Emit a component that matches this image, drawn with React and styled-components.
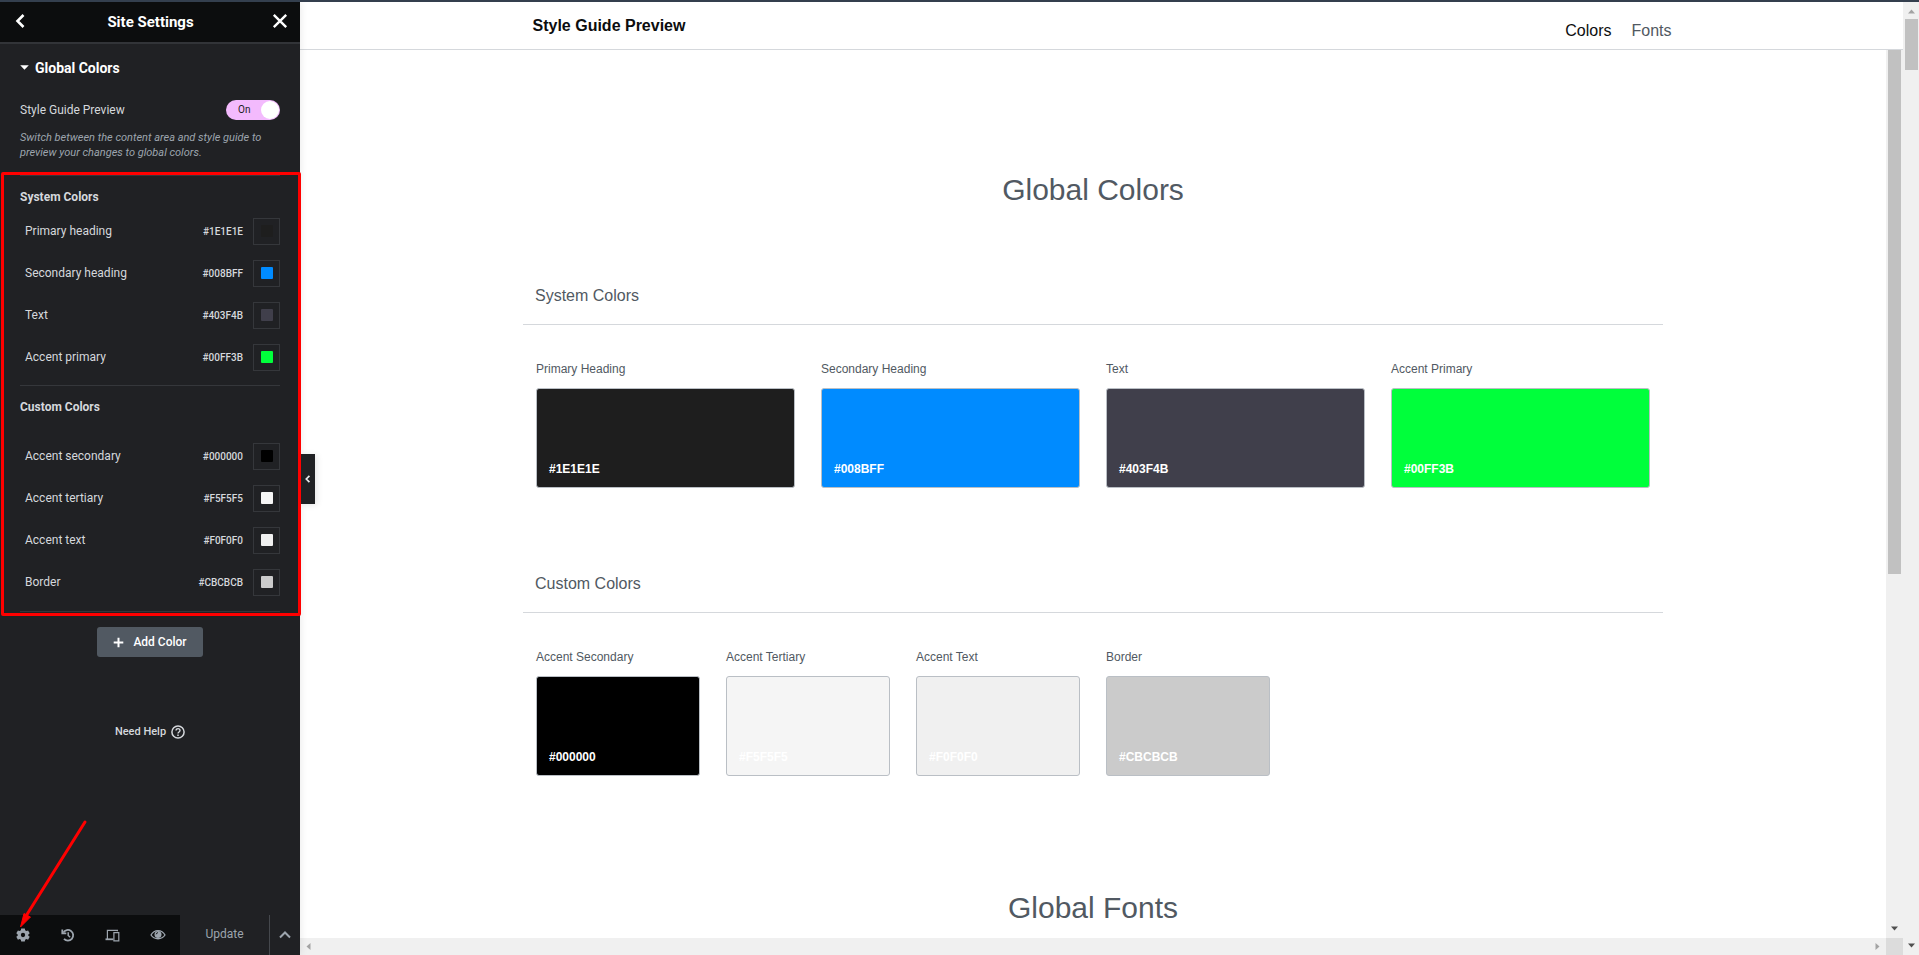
import React, { useState } from "react";
import styled, { createGlobalStyle } from "styled-components";

const GlobalStyle = createGlobalStyle`
  *, *::before, *::after { box-sizing: border-box; }
  body {
    margin: 0;
    background: #fff;
    font-family: "Liberation Sans", Arial, sans-serif;
  }
  h1, h2, h3, p, ul { margin: 0; padding: 0; font-weight: 400; }
  ul { list-style: none; }
  button { font: inherit; border: 0; padding: 0; margin: 0; background: none; color: inherit; cursor: pointer; }
  a { color: inherit; text-decoration: none; }
  svg { display: block; }
`;

const Window = styled.div`
  position: relative;
  display: flex;
  height: 100vh;
  border-top: 2px solid #343f4e;
  overflow: hidden;
`;

/* ---------- settings panel ---------- */

const Panel = styled.aside`
  position: relative;
  z-index: 1;
  display: flex;
  flex-direction: column;
  flex: 0 0 300px;
  background: #202124;
  color: #d5d8dc;
  font-family: Roboto, sans-serif;
  font-size: 12px;
  box-shadow: 0 0 8px rgba(0, 0, 0, 0.1);
`;

const PanelHeader = styled.header`
  display: flex;
  align-items: center;
  justify-content: space-between;
  height: 42px;
  flex: none;
  padding: 0 12px 2px 15px;
  background: #0c0d0e;
  border-bottom: 2px solid #323438;
  color: #fff;
`;

const PanelTitle = styled.h1`
  padding-top: 2px;
  font-size: 15px;
  line-height: 20px;
  font-weight: 700;
`;

const HeaderButton = styled.button`
  display: grid;
  place-items: center;
`;

const PanelBody = styled.div`
  flex: 1;
  min-height: 0;
  padding: 0 20px;
`;

const SectionToggle = styled.button`
  display: flex;
  align-items: center;
  gap: 6px;
  height: 48px;
  padding-bottom: 1px;
  color: #fff;
  font-size: 14px;
  font-weight: 700;
`;

const SwitchRow = styled.label`
  display: flex;
  align-items: center;
  justify-content: space-between;
  height: 36px;
  line-height: 20px;
  cursor: pointer;
`;

const SwitchInput = styled.input`
  position: absolute;
  opacity: 0;
`;

const SwitchTrack = styled.span`
  display: flex;
  align-items: center;
  justify-content: space-between;
  flex-direction: ${(p) => (p.$on ? "row" : "row-reverse")};
  width: 54px;
  height: 20px;
  padding: 0 1px 0 12px;
  border-radius: 10px;
  background: ${(p) => (p.$on ? "#f3bafd" : "#515962")};
  color: #202124;
  font-size: 10px;

  &::after {
    content: "";
    width: 18px;
    height: 18px;
    border-radius: 50%;
    background: #fff;
  }
`;

const Hint = styled.p`
  margin-top: 2px;
  padding-bottom: 15px;
  color: #9da5ae;
  font-size: 11px;
  font-style: italic;
  line-height: 15px;
`;

const ColorGroup = styled.section`
  border-top: 1px solid #35373b;
`;

const GroupTitle = styled.h2`
  padding: 14px 0 ${(p) => (p.$spaced ? 28 : 13)}px;
  font-size: 12px;
  line-height: 15px;
  font-weight: 700;
`;

const ColorList = styled.ul`
  display: grid;
  gap: 15px;
  padding-bottom: 14px;
`;

const ColorRow = styled.li`
  display: flex;
  align-items: center;
  gap: 10px;
  height: 27px;
  padding-left: 5px;
`;

const ColorName = styled.span`
  flex: 1;
  line-height: 15px;
`;

const ColorCode = styled.span`
  font-size: 10px;
  font-weight: 500;
  line-height: 15px;
`;

const Picker = styled.button`
  display: grid;
  width: 27px;
  height: 27px;
  padding: 6px 6px 7px 7px;
  border: 1px solid #35373b;

  &::before {
    content: "";
    border-radius: 1px;
    background: ${(p) => p.$color};
  }
`;

const AddArea = styled.div`
  display: flex;
  flex-direction: column;
  align-items: center;
  gap: 67px;
  margin-top: 1px;
  padding-top: 15px;
  border-top: 1px solid #35373b;
`;

const AddButton = styled.button`
  display: flex;
  align-items: center;
  justify-content: center;
  gap: 9px;
  width: 106px;
  height: 30px;
  border-radius: 3px;
  background: #515962;
  color: #fff;
  font-size: 12px;
  font-weight: 500;
`;

const HelpLink = styled.a`
  display: flex;
  align-items: center;
  gap: 5px;
  font-size: 11px;
  font-weight: 500;
  line-height: 16px;
`;

const PanelFooter = styled.footer`
  display: flex;
  height: 40px;
  flex: none;
  color: #9da5ae;
`;

const Tools = styled.nav`
  display: flex;
  flex: 0 0 180px;
  background: #0c0d0e;
`;

const Tool = styled.button`
  display: grid;
  place-items: center;
  flex: 1;
`;

const UpdateButton = styled.button`
  flex: 1;
  padding-bottom: 2px;
  border-right: 1px solid #45484d;
  font-size: 12px;
`;

const UpdateMenu = styled.button`
  display: grid;
  place-items: center;
  width: 30px;
`;

const CollapseHandle = styled.button`
  position: absolute;
  top: calc(50% - 25px);
  left: 100%;
  display: grid;
  place-items: center;
  width: 15px;
  height: 50px;
  background: #202124;
  color: #e6e8ea;
  box-shadow: 2px 1px 6px rgba(0, 0, 0, 0.1);
`;

/* ---------- preview ---------- */

const Preview = styled.main`
  display: flex;
  flex-direction: column;
  flex: 1;
  min-width: 0;
`;

const PreviewHeader = styled.header`
  flex: none;
  height: 48px;
  border-bottom: 1px solid #d5d8dc;
`;

const HeaderInner = styled.div`
  display: flex;
  justify-content: space-between;
  width: 100%;
  max-width: 1140px;
  margin: 0 auto;
  padding: 10px 0 0 1px;
`;

const PreviewTitle = styled.h2`
  font-size: 16px;
  font-weight: 700;
  line-height: 28px;
  color: #0c0d0e;
`;

const Links = styled.nav`
  display: flex;
  gap: 20px;
  padding-top: 5px;
  font-size: 16px;
  line-height: 28px;
`;

const TabLink = styled.a`
  color: ${(p) => (p.$active ? "#0c0d0e" : "#515962")};
`;

const PreviewBody = styled.div`
  display: flex;
  flex: 1;
  min-height: 0;
`;

const Canvas = styled.div`
  flex: 1;
  min-width: 0;
  overflow: hidden;
  color: #515962;
`;

const Guide = styled.div`
  width: 100%;
  max-width: 1140px;
  margin: 0 auto;
  padding-top: 120px;
`;

const GuideTitle = styled.h2`
  font-size: 30px;
  line-height: 40px;
  text-align: center;
`;

const SwatchSection = styled.section`
  padding-top: ${(p) => (p.$first ? 76 : 86)}px;
`;

const SwatchTitle = styled.h3`
  padding: 0 12px 18px;
  border-bottom: 1px solid #d5d8dc;
  font-size: 16px;
  line-height: 20px;
`;

const SwatchGrid = styled.div`
  display: grid;
  grid-template-columns: repeat(${(p) => p.$columns}, 1fr);
  padding-top: 36px;
`;

const Swatch = styled.figure`
  margin: 0;
  padding: 0 13px;
`;

const SwatchName = styled.figcaption`
  padding-bottom: 11px;
  font-size: 12px;
  line-height: 16px;
`;

const SwatchCard = styled.div`
  display: flex;
  align-items: flex-end;
  height: 100px;
  padding: 10px 12px;
  border: 1px solid #babfc5;
  border-radius: 3px;
  background: ${(p) => p.$color};
  color: #fff;
  font-size: 12px;
  font-weight: 700;
  line-height: 16px;
`;

const NextTitle = styled(GuideTitle)`
  padding-top: 112px;
`;

/* ---------- scroll tracks ---------- */

const Track = styled.div`
  display: flex;
  flex-direction: column;
  justify-content: space-between;
  align-items: center;
  flex: 0 0 ${(p) => p.$size || 17}px;
  padding: ${(p) => p.$pad};
  background: #f0f0f0;
`;

const Thumb = styled.div`
  width: 13px;
  height: ${(p) => p.$height};
  margin-bottom: auto;
  background: #c1c1c1;
`;

const OuterThumb = styled(Thumb)`
  margin-top: 5px;
`;

const BottomBar = styled.div`
  display: flex;
  flex: 0 0 17px;
`;

const BottomTrack = styled.div`
  display: flex;
  flex: 1;
  align-items: center;
  justify-content: space-between;
  padding: 0 6px;
  background: #f0f0f0;
`;

const Corner = styled.div`
  width: 17px;
  background: #dcdcdc;
`;

/* ---------- annotation ---------- */

const Highlight = styled.div`
  position: absolute;
  z-index: 2;
  top: 170px;
  left: 1px;
  width: 300px;
  height: 444px;
  border: 3px solid #f00;
  border-radius: 2px;
  pointer-events: none;
`;

const Pointer = styled.svg`
  position: absolute;
  z-index: 2;
  left: 16px;
  bottom: 24px;
  pointer-events: none;
`;

/* ---------- icons ---------- */

const Chevron = ({ size, d, width = 2 }) => (
  <svg width={size} height={size} viewBox="0 0 14 14" fill="none" stroke="currentColor" strokeWidth={width}>
    <path d={d} />
  </svg>
);

const CloseIcon = () => (
  <svg width="16" height="16" viewBox="0 0 16 16" fill="none" stroke="currentColor" strokeWidth="2.4">
    <path d="M1.8 1.8 14.2 14.2M14.2 1.8 1.8 14.2" />
  </svg>
);

const CaretIcon = () => (
  <svg width="9" height="5" viewBox="0 0 9 5" fill="currentColor">
    <path d="M0.2 0.3h8.600L4.5 4.700z" />
  </svg>
);

const PlusIcon = () => (
  <svg width="11" height="11" viewBox="0 0 11 11" fill="none" stroke="currentColor" strokeWidth="2">
    <path d="M5.5 .7v9.600M.7 5.5h9.600" />
  </svg>
);

const HelpIcon = () => (
  <svg width="14" height="14" viewBox="0 0 14 14" fill="none" stroke="currentColor" strokeWidth="1.5">
    <circle cx="7" cy="7" r="6.1" />
    <path d="M5 5.6c0-2.7 4-2.5 4-.1 0 1.5-2 1.5-2 3" strokeWidth="1.4" />
    <path d="M7 9.4v1.5" />
  </svg>
);

const GearIcon = () => (
  <svg width="14" height="14" viewBox="0 0 24 24" fill="currentColor">
    <path
      fillRule="evenodd"
      d="M8.900 0.800h6.200l.6 3.200 2 1.200 3-1.100 2.800 5-2.400 2v2l2.400 2-2.800 5-3-1.100-2 1.200-.6 3H8.900l-.6-3-2-1.200-3 1.100-2.800-5 2.400-2v-2l-2.400-2 2.800-5 3 1.100 2-1.200zM12 8.300a3.700 3.700 0 1 0 0 7.400 3.700 3.700 0 0 0 0-7.400z"
    />
  </svg>
);

const HistoryIcon = () => (
  <svg width="14" height="14" viewBox="0 0 14 14" fill="none" stroke="currentColor" strokeWidth="1.8">
    <path d="M2.300 4.600A5.300 5.300 0 1 1 3 10.900" />
    <path d="M1.300 1.400v4h4" />
    <path d="M7.200 4.200v3.300l2 1.700" strokeWidth="1.500" />
  </svg>
);

const DevicesIcon = () => (
  <svg width="15" height="13" viewBox="0 0 15 13" fill="none" stroke="currentColor" strokeWidth="1.200">
    <path d="M12.400 2.200V1.400H2.400V10" />
    <path d="M8.900 3.700h4.900v8.200H8.900z" />
    <path d="M.5 10.300h7.700" strokeWidth="1.800" />
  </svg>
);

const EyeIcon = () => (
  <svg width="16" height="12" viewBox="0 0 16 12">
    <path
      d="M1 6C4.200.2 11.800.2 15 6 11.800 11 4.200 11 1 6z"
      fill="none"
      stroke="currentColor"
      strokeWidth="1.300"
    />
    <circle cx="8" cy="5.500" r="3.500" fill="currentColor" />
    <path d="M6.200 5.300A2 2 0 0 1 8 3.600" fill="none" stroke="#0c0d0e" strokeWidth=".9" />
  </svg>
);

const arrows = {
  up: { w: 7, h: 5, d: "M0 4.500h7L3.500.5z" },
  down: { w: 7, h: 5, d: "M0 .5h7L3.500 4.500z" },
  left: { w: 5, h: 7, d: "M4.500 0v7L.5 3.500z" },
  right: { w: 5, h: 7, d: "M.5 0v7l4-3.500z" },
};

const ScrollArrow = ({ dir, color = "#a3a3a3" }) => {
  const { w, h, d } = arrows[dir];
  return (
    <svg width={w} height={h} fill={color} aria-hidden="true">
      <path d={d} />
    </svg>
  );
};

/* ---------- data ---------- */

const systemColors = [
  { name: "Primary heading", title: "Primary Heading", code: "#1E1E1E" },
  { name: "Secondary heading", title: "Secondary Heading", code: "#008BFF" },
  { name: "Text", title: "Text", code: "#403F4B" },
  { name: "Accent primary", title: "Accent Primary", code: "#00FF3B" },
];

const customColors = [
  { name: "Accent secondary", title: "Accent Secondary", code: "#000000" },
  { name: "Accent tertiary", title: "Accent Tertiary", code: "#F5F5F5" },
  { name: "Accent text", title: "Accent Text", code: "#F0F0F0" },
  { name: "Border", title: "Border", code: "#CBCBCB" },
];

const PanelColors = ({ title, colors, spaced }) => (
  <ColorGroup>
    <GroupTitle $spaced={spaced}>{title}</GroupTitle>
    <ColorList>
      {colors.map((c) => (
        <ColorRow key={c.code}>
          <ColorName>{c.name}</ColorName>
          <ColorCode>{c.code}</ColorCode>
          <Picker type="button" $color={c.code} aria-label={`Pick ${c.name}`} />
        </ColorRow>
      ))}
    </ColorList>
  </ColorGroup>
);

const GuideColors = ({ title, colors, columns, first }) => (
  <SwatchSection $first={first}>
    <SwatchTitle>{title}</SwatchTitle>
    <SwatchGrid $columns={columns}>
      {colors.map((c) => (
        <Swatch key={c.code}>
          <SwatchName>{c.title}</SwatchName>
          <SwatchCard $color={c.code}>{c.code}</SwatchCard>
        </Swatch>
      ))}
    </SwatchGrid>
  </SwatchSection>
);

export default function App() {
  const [preview, setPreview] = useState(true);

  return (
    <>
      <GlobalStyle />
      <Window>
        <Panel>
          <PanelHeader>
            <HeaderButton type="button" aria-label="Back">
              <Chevron size={14} width={2.6} d="M8.500 1 2.500 7l6 6" />
            </HeaderButton>
            <PanelTitle>Site Settings</PanelTitle>
            <HeaderButton type="button" aria-label="Close">
              <CloseIcon />
            </HeaderButton>
          </PanelHeader>

          <PanelBody>
            <SectionToggle type="button" aria-expanded="true">
              <CaretIcon />
              Global Colors
            </SectionToggle>
            <SwitchRow>
              Style Guide Preview
              <SwitchInput type="checkbox" checked={preview} onChange={(e) => setPreview(e.target.checked)} />
              <SwitchTrack $on={preview}>{preview ? "On" : "Off"}</SwitchTrack>
            </SwitchRow>
            <Hint>Switch between the content area and style guide to preview your changes to global colors.</Hint>

            <PanelColors title="System Colors" colors={systemColors} />
            <PanelColors title="Custom Colors" colors={customColors} spaced />

            <AddArea>
              <AddButton type="button">
                <PlusIcon />
                Add Color
              </AddButton>
              <HelpLink href="#help">
                Need Help
                <HelpIcon />
              </HelpLink>
            </AddArea>
          </PanelBody>

          <PanelFooter>
            <Tools>
              <Tool type="button" aria-label="Settings"><GearIcon /></Tool>
              <Tool type="button" aria-label="History"><HistoryIcon /></Tool>
              <Tool type="button" aria-label="Responsive mode"><DevicesIcon /></Tool>
              <Tool type="button" aria-label="Preview changes"><EyeIcon /></Tool>
            </Tools>
            <UpdateButton type="button">Update</UpdateButton>
            <UpdateMenu type="button" aria-label="Save options">
              <Chevron size={14} d="M2 9.500 7 4.500l5 5" />
            </UpdateMenu>
          </PanelFooter>

          <CollapseHandle type="button" aria-label="Hide panel">
            <Chevron size={8} width={3} d="M9.500 1.500 4 7l5.500 5.500" />
          </CollapseHandle>
          <Highlight />
          <Pointer width="72" height="112" viewBox="0 0 72 112">
            <path d="M69 3 10 97" stroke="#f00" strokeWidth="3" strokeLinecap="round" />
            <path d="M4.500 108 8 94.500 14.500 98z" fill="#f00" stroke="#f00" />
          </Pointer>
        </Panel>

        <Preview>
          <PreviewHeader>
            <HeaderInner>
              <PreviewTitle>Style Guide Preview</PreviewTitle>
              <Links>
                <TabLink href="#colors" $active>Colors</TabLink>
                <TabLink href="#fonts">Fonts</TabLink>
              </Links>
            </HeaderInner>
          </PreviewHeader>
          <PreviewBody>
            <Canvas>
              <Guide>
                <GuideTitle>Global Colors</GuideTitle>
                <GuideColors title="System Colors" colors={systemColors} columns={4} first />
                <GuideColors title="Custom Colors" colors={customColors} columns={6} />
                <NextTitle>Global Fonts</NextTitle>
              </Guide>
            </Canvas>
            <Track $pad="0 0 7px">
              <Thumb $height="calc(60% - 5px)" />
              <ScrollArrow dir="down" color="#505050" />
            </Track>
          </PreviewBody>
          <BottomBar>
            <BottomTrack>
              <ScrollArrow dir="left" />
              <ScrollArrow dir="right" />
            </BottomTrack>
            <Corner />
          </BottomBar>
        </Preview>

        <Track $size={16} $pad="7px 0">
          <ScrollArrow dir="up" />
          <OuterThumb $height="51px" />
          <ScrollArrow dir="down" color="#505050" />
        </Track>
      </Window>
    </>
  );
}
